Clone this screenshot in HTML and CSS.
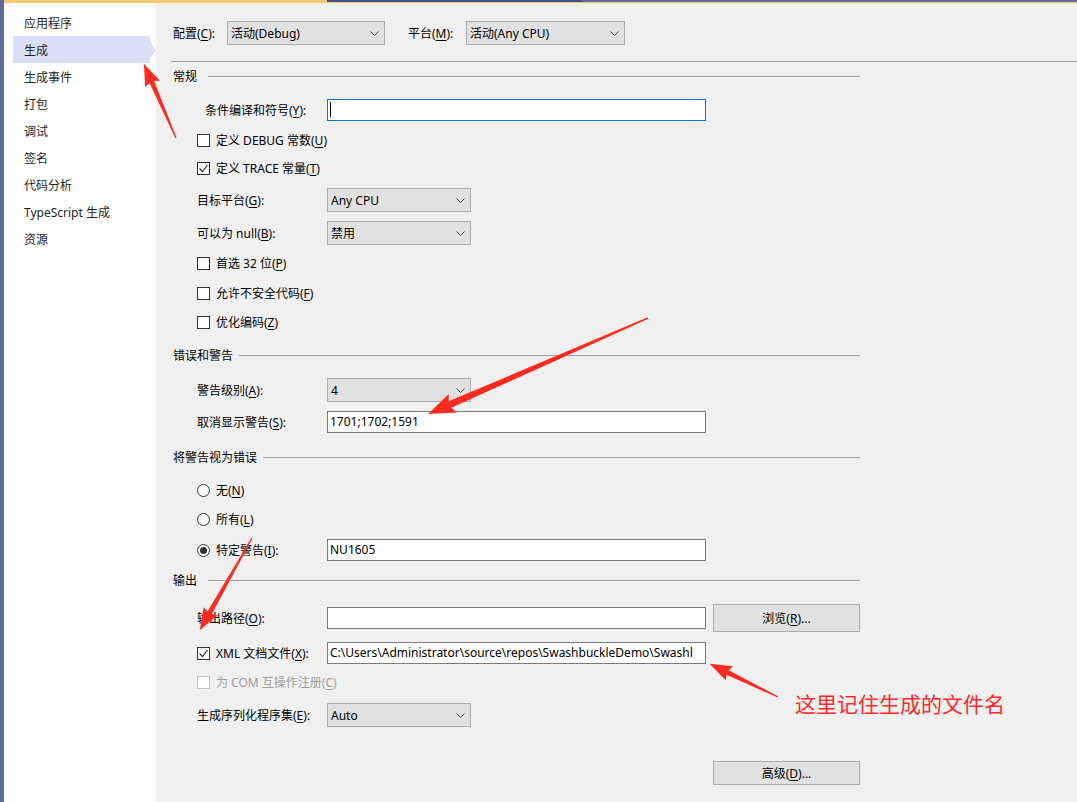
FILE: index.html
```html
<!DOCTYPE html>
<html lang="zh-CN">
<head>
<meta charset="utf-8">
<title>生成</title>
<link rel="stylesheet" href="styles.css">
</head>
<body>
<div class="window">
  <div class="titlebar"></div>
  <div class="frame">
    <ul class="nav">
      <li>应用程序</li>
      <li class="active">生成</li>
      <li>生成事件</li>
      <li>打包</li>
      <li>调试</li>
      <li>签名</li>
      <li>代码分析</li>
      <li>TypeScript 生成</li>
      <li>资源</li>
    </ul>

    <div class="page">
      <div class="toolbar">
        <span class="tb-label cfg">配置(<u>C</u>):</span>
        <div class="combo cfg-combo">活动(Debug)<svg class="chev" width="9" height="5"><path d="M0.5 0.5L4.5 4.5L8.5 0.5"/></svg></div>
        <span class="tb-label plat">平台(<u>M</u>):</span>
        <div class="combo plat-combo">活动(Any CPU)<svg class="chev" width="9" height="5"><path d="M0.5 0.5L4.5 4.5L8.5 0.5"/></svg></div>
      </div>
      <div class="rule"></div>

      <div class="group">
        <div class="section s-general"><span>常规</span><i></i></div>

        <div class="row r-sym">
          <span class="lbl lbl-sym">条件编译和符号(<u>Y</u>):</span>
          <div class="field focus"><span class="caret"></span></div>
        </div>
        <div class="row r-debug"><span class="check"></span><span>定义 DEBUG 常数(<u>U</u>)</span></div>
        <div class="row r-trace"><span class="check on"><svg width="11" height="11"><path d="M1.5 5.5L4.5 8.5L9.5 2"/></svg></span><span>定义 TRACE 常量(<u>T</u>)</span></div>
        <div class="row r-target">
          <span class="lbl">目标平台(<u>G</u>):</span>
          <div class="combo short">Any CPU<svg class="chev" width="9" height="5"><path d="M0.5 0.5L4.5 4.5L8.5 0.5"/></svg></div>
        </div>
        <div class="row r-null">
          <span class="lbl">可以为 null(<u>B</u>):</span>
          <div class="combo short">禁用<svg class="chev" width="9" height="5"><path d="M0.5 0.5L4.5 4.5L8.5 0.5"/></svg></div>
        </div>
        <div class="row r-32"><span class="check"></span><span>首选 32 位(<u>P</u>)</span></div>
        <div class="row r-unsafe"><span class="check"></span><span>允许不安全代码(<u>F</u>)</span></div>
        <div class="row r-opt"><span class="check"></span><span>优化编码(<u>Z</u>)</span></div>

        <div class="section s-errors"><span>错误和警告</span><i></i></div>
        <div class="row r-level">
          <span class="lbl">警告级别(<u>A</u>):</span>
          <div class="combo short">4<svg class="chev" width="9" height="5"><path d="M0.5 0.5L4.5 4.5L8.5 0.5"/></svg></div>
        </div>
        <div class="row r-suppress">
          <span class="lbl">取消显示警告(<u>S</u>):</span>
          <div class="field">1701;1702;1591</div>
        </div>

        <div class="section s-treat"><span>将警告视为错误</span><i></i></div>
        <div class="row r-none"><span class="radio"></span><span>无(<u>N</u>)</span></div>
        <div class="row r-all"><span class="radio"></span><span>所有(<u>L</u>)</span></div>
        <div class="row r-specific">
          <span class="opt"><span class="radio on"></span><span>特定警告(<u>I</u>):</span></span>
          <div class="field">NU1605</div>
        </div>

        <div class="section s-output"><span>输出</span><i></i></div>
        <div class="row r-path">
          <span class="lbl">输出路径(<u>O</u>):</span>
          <div class="field"></div>
          <div class="button browse">浏览(<u>R</u>)...</div>
        </div>
        <div class="row r-xml">
          <span class="opt"><span class="check on"><svg width="11" height="11"><path d="M1.5 5.5L4.5 8.5L9.5 2"/></svg></span><span>XML 文档文件(<u>X</u>):</span></span>
          <div class="field">C:\Users\Administrator\source\repos\SwashbuckleDemo\Swashl</div>
        </div>
        <div class="row r-com disabled"><span class="check"></span><span>为 COM 互操作注册(<u>C</u>)</span></div>
        <div class="row r-serial">
          <span class="lbl">生成序列化程序集(<u>E</u>):</span>
          <div class="combo short">Auto<svg class="chev" width="9" height="5"><path d="M0.5 0.5L4.5 4.5L8.5 0.5"/></svg></div>
        </div>
        <div class="row r-adv">
          <div class="button">高级(<u>D</u>)...</div>
        </div>
      </div>
    </div>
  </div>
</div>

<!-- red annotations drawn over the screenshot -->
<svg class="marks" width="1077" height="802">
  <polygon transform="translate(176,138) rotate(-113.4)" points="0,-0.6 61,-2.5 59,-8 81,0 59,8 61,2.5 0,0.6"/>
  <polygon transform="translate(648,318) rotate(156.4)" points="0,-0.8 216,-3.5 213,-10 240,0 213,10 216,3.5 0,0.8"/>
  <polygon transform="translate(252,538) rotate(119.5)" points="0,-0.6 86,-2.5 84,-8 106,0 84,8 86,2.5 0,0.6"/>
  <polygon transform="translate(778,697) rotate(-154.1)" points="0,-0.6 56,-2.5 54,-8 76,0 54,8 56,2.5 0,0.6"/>
</svg>
<div class="note">这里记住生成的文件名</div>
</body>
</html>
```

FILE: styles.css
```css
body {
	margin: 0;
	width: 1077px;
	height: 802px;
	overflow: hidden;
	position: relative;
	background: #f0f0f0;
	color: #000;
	font-family: "Noto Sans", "Noto Sans CJK SC", sans-serif;
	font-size: 12px;
}
u {
	text-decoration-thickness: 1px;
	text-underline-offset: 2px;
}
.window {
	display: flex;
	flex-direction: column;
	height: 802px;
	border-left: 4px solid #5d6a9b;
}
.titlebar {
	height: 3px;
	background:
		linear-gradient(to right, #f4c878 0 323px, transparent 323px),
		linear-gradient(to right, #3f4f80 0 578px, #5f6b9c 578px) top / 100% 2px no-repeat,
		#f4c878;
}
.frame {
	flex: 1;
	display: flex;
}

/* left navigation */
.nav {
	width: 152px;
	margin: 0;
	padding: 6px 0 0;
	list-style: none;
	background: #fff;
}
.nav li {
	position: relative;
	box-sizing: border-box;
	width: 137px;
	height: 27px;
	line-height: 29px;
	margin-left: 9px;
	padding-left: 11px;
	color: #1e1e1e;
}
.nav li.active {
	background: #dadef6;
}
.nav li.active::after {
	content: "";
	position: absolute;
	right: -6px;
	top: 6px;
	border-left: 6px solid #dadef6;
	border-top: 8px solid transparent;
	border-bottom: 8px solid transparent;
}

/* page */
.page {
	flex: 1;
	background: #f0f0f0;
}
.toolbar {
	display: flex;
	align-items: center;
	height: 24px;
	margin: 18px 0 0 17px;
}
.tb-label.cfg {
	width: 54px;
}
.tb-label.plat {
	width: 58px;
	margin-left: 23px;
}
.cfg-combo {
	width: 158px;
}
.plat-combo {
	width: 159px;
}
.rule {
	height: 1px;
	background: #a0a0a0;
	margin: 16px 0 0 15px;
}
.group {
	width: 687px;
	margin-left: 17px;
}
.section {
	display: flex;
	align-items: center;
	height: 24px;
}
.section span {
	min-width: 29px;
}
.section i {
	flex: 1;
	height: 1px;
	margin-left: 6px;
	background: #a0a0a0;
}
.row {
	display: flex;
	align-items: center;
	height: 24px;
	padding-left: 24px;
}
.lbl, .opt {
	width: 130px;
	flex: none;
	display: flex;
	align-items: center;
}
.lbl-sym {
	padding-left: 8px;
	box-sizing: border-box;
}

/* controls */
.combo {
	display: flex;
	align-items: center;
	justify-content: space-between;
	box-sizing: border-box;
	height: 24px;
	padding: 0 5px 0 3px;
	border: 1px solid #adadad;
	background: #e1e1e1;
}
.combo.short {
	width: 144px;
}
.chev path {
	fill: none;
	stroke: #404040;
	stroke-width: 1;
}
.field {
	box-sizing: border-box;
	width: 379px;
	height: 22px;
	line-height: 20px;
	padding-left: 2px;
	border: 1px solid #7a7a7a;
	background: #fff;
	overflow: hidden;
	white-space: nowrap;
}
.field.focus {
	border-color: #0078d7;
}
.caret {
	display: inline-block;
	width: 1px;
	height: 15px;
	margin-top: 2px;
	background: #000;
	vertical-align: top;
}
.check, .radio {
	flex: none;
	box-sizing: border-box;
	width: 13px;
	height: 13px;
	margin-right: 6px;
	border: 1px solid #333;
	background: #fff;
	display: flex;
	align-items: center;
	justify-content: center;
}
.check svg path {
	fill: none;
	stroke: #333;
	stroke-width: 1.2;
}
.radio {
	border-radius: 50%;
}
.radio.on::before {
	content: "";
	width: 7px;
	height: 7px;
	border-radius: 50%;
	background: #333;
}
.disabled {
	color: #a0a0a0;
}
.disabled .check {
	border-color: #c4c4c4;
}
.button {
	box-sizing: border-box;
	width: 147px;
	height: 24px;
	display: flex;
	align-items: center;
	justify-content: center;
	border: 1px solid #adadad;
	background: #e1e1e1;
}
.button.browse {
	height: 28px;
	margin-left: 7px;
}

/* vertical rhythm of the rows */
.s-general { margin-top: 2px; }
.r-sym { margin-top: 10px; }
.r-debug { margin-top: 6px; }
.r-trace { margin-top: 4px; }
.r-target { margin-top: 8px; }
.r-null { margin-top: 9px; }
.r-32 { margin-top: 6px; }
.r-unsafe { margin-top: 6px; }
.r-opt { margin-top: 5px; }
.s-errors { margin-top: 9px; }
.r-level { margin-top: 11px; }
.r-suppress { margin-top: 8px; }
.s-treat { margin-top: 11px; }
.r-none { margin-top: 9px; }
.r-all { margin-top: 5px; }
.r-specific { margin-top: 7px; }
.s-output { margin-top: 6px; }
.r-path { margin-top: 12px; height: 28px; }
.r-xml { margin-top: 9px; }
.r-com { margin-top: 5px; }
.r-serial { margin-top: 9px; }
.r-adv { margin-top: 34px; justify-content: flex-end; }

/* annotations */
.marks {
	position: absolute;
	left: 0;
	top: 0;
	pointer-events: none;
}
.marks polygon {
	fill: #ff2a1f;
}
.note {
	position: absolute;
	left: 795px;
	top: 690px;
	line-height: 26px;
	font-size: 21px;
	font-family: "Noto Sans CJK SC", sans-serif;
	color: #ff2a2a;
}
```
